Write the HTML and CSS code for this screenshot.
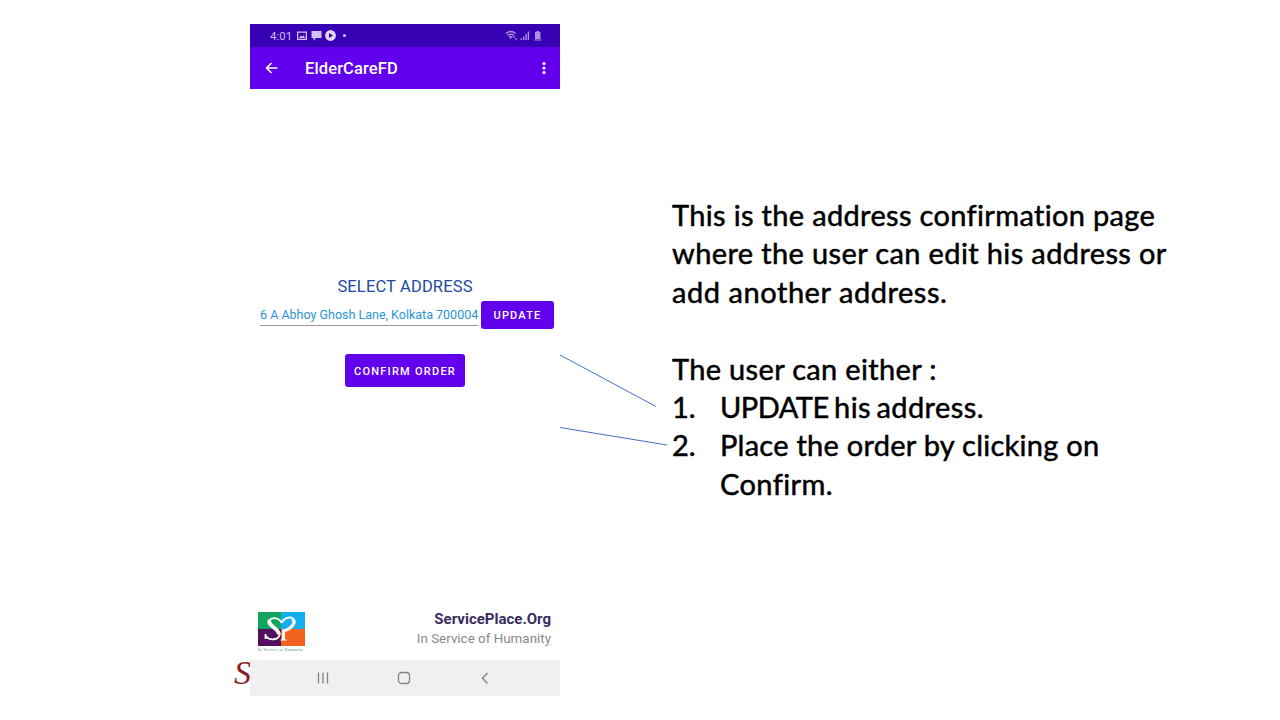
FILE: index.html
```html
<!DOCTYPE html>
<html lang="en">
<head>
<meta charset="utf-8">
<title>ElderCareFD</title>
<link rel="stylesheet" href="styles.css">
</head>
<body>
<main class="slide">
  <span class="slide-mark">S</span>
  <section class="phone">
    <div class="status">
      <span class="clock">4:01</span>
      <svg class="status-left" width="52" height="12" viewBox="0 0 52 12">
        <path fill="#d0c2f4" fill-rule="evenodd" d="M0 1.500h10v8.500H0zM1.300 2.800v5.900h7.400V2.800zM2 8l1.900-2.600 1.400 1.400 1.300-1.900L8 8z"/>
        <path fill="#d0c2f4" d="M14.500 1h10v7h-5.500l-2.500 2.700V8h-2z"/>
        <circle cx="33.500" cy="5.500" r="5.400" fill="#e0d7f8"/>
        <path fill="#3700b3" d="M32 2.900l4 2.600-4 2.600z"/>
        <circle cx="47.500" cy="5.500" r="1.600" fill="#d0c2f4"/>
      </svg>
      <svg class="status-right" width="38" height="12" viewBox="0 0 38 12">
        <g fill="none" stroke="#a991e4" stroke-width="1.500"><path d="M.8 3.500q5-4 10 0M2.400 5.500q3.400-2.600 6.600 0M4 7.400q1.700-1.200 3.400 0"/></g>
        <path fill="#a991e4" d="M4.600 7.600h2.200l-1.100 1.600zM8 7.500l1.300-1.800 1.300 1.800zM9.800 8.500h2.600l-1.300 2zM15.500 8.500h1.500V10h-1.500zM18 6.500h1.400V10H18zM20.400 4h1.400v6h-1.400zM22.700 1.500h1.400V10h-1.400zM30 2h1.500V1h2.500v1h1.500v7H30zM29.500 9.500h7v1h-7z"/>
      </svg>
    </div>
    <header class="appbar">
      <svg class="back" width="14" height="12" viewBox="0 0 14 12"><path d="M12.500 6H1.500M6.500 1l-5 5 5 5" fill="none" stroke="#fff" stroke-width="1.500"/></svg>
      <h1 class="title">ElderCareFD</h1>
      <svg class="more" width="4" height="14" viewBox="0 0 4 14" fill="#fff"><circle cx="2" cy="2.500" r="1.600"/><circle cx="2" cy="7" r="1.600"/><circle cx="2" cy="11.500" r="1.600"/></svg>
    </header>
    <div class="content">
      <h2 class="select">SELECT ADDRESS</h2>
      <div class="row">
        <span class="address">6 A Abhoy Ghosh Lane, Kolkata 700004</span>
        <button class="btn update">UPDATE</button>
      </div>
      <button class="btn confirm">CONFIRM ORDER</button>
    </div>
    <footer class="brand">
      <div class="logo">
        <svg width="47" height="34" viewBox="0 0 47 34">
          <path fill="#10a45c" d="M0 0h23v17H0z"/><path fill="#12aeef" d="M23 0h24v17H23z"/><path fill="#54105f" d="M0 17h23v17H0z"/><path fill="#f26322" d="M23 17h24v17H23z"/>
          <g fill="none" stroke="#fff" stroke-linejoin="round">
            <path stroke-width="1.800" d="M23.500 11C22 6 14.500 4.500 11.500 8"/>
            <path stroke-width="3.700" d="M11.700 8C8.500 14 21 15.500 21 22.500"/>
            <path stroke-width="1.800" d="M21.700 21.500c0 7-10.500 7.500-13.700 2.500M7.500 22v5"/>
            <path stroke-width="2" d="M23.500 11c2-5 8-6.500 11.500-4.500"/>
            <path stroke-width="3.300" d="M34.500 7c4.500 4-2 10-8.500 12"/>
            <path stroke-width="2.800" d="M25.500 17.500V28"/>
            <path stroke-width="1" d="M22.500 28h6"/>
          </g>
        </svg>
        <span class="logo-caption">In Service of Humanity</span>
      </div>
      <div class="brand-text">
        <strong class="brand-name">ServicePlace.Org</strong>
        <span class="tagline">In Service of Humanity</span>
      </div>
    </footer>
    <nav class="nav">
      <svg width="14" height="14" viewBox="0 0 14 14"><path d="M2.500 1.500v11M7 1.500v11M11.500 1.500v11" stroke="#848484" stroke-width="1.300"/></svg>
      <svg width="14" height="14" viewBox="0 0 14 14"><rect x="1.500" y="1.500" width="11" height="11" rx="3" fill="none" stroke="#848484" stroke-width="1.300"/></svg>
      <svg width="14" height="14" viewBox="0 0 14 14"><path d="M9.500 2L4.500 7.200l5 5.300" fill="none" stroke="#848484" stroke-width="1.400"/></svg>
    </nav>
  </section>
  <svg class="connectors" width="112" height="96" viewBox="0 0 112 96"><path d="M0 5l96 51.500M0 77.500l107 17.500" fill="none" stroke="#4472c4" stroke-width="1"/></svg>
  <section class="notes">
    <p class="para"><span class="l1">This is the address confirmation page</span><br><span class="l2">where the user can edit his address or</span><br><span class="l3">add another address.</span></p>
    <p class="para"><span class="l4">The user can either :</span></p>
    <div class="item"><span class="num">1.</span><span class="l5"><span class="caps">UPDATE</span> his address.</span></div>
    <div class="item"><span class="num">2.</span><div><span class="l6">Place the order by clicking on</span><br><span class="l7">Confirm.</span></div></div>
  </section>
</main>
</body>
</html>
```
FILE: styles.css
```css
* { box-sizing: border-box; }
body { margin: 0; background: #fff; }
h1, h2, p { margin: 0; }
.slide { position: relative; display: flex; width: 1280px; height: 720px; padding: 24px 0 0 250px; overflow: hidden; }
.slide-mark { position: absolute; left: 234px; top: 654px; font: italic 34px/38px "Liberation Serif", serif; color: #8c1c26; }
.phone { position: relative; display: flex; flex-direction: column; width: 310px; height: 672px; background: #fff; font-family: Roboto, sans-serif; }
.status { display: flex; align-items: center; height: 23px; padding: 0 17px 0 20px; background: #3700b3; }
.clock { width: 27px; font-size: 11.500px; line-height: 14px; color: #cdbff2; }
.status-right { margin-left: auto; }
.appbar { display: flex; align-items: center; height: 42px; padding: 0 14px 0 15px; background: #6200ee; }
.title { margin: 2px 0 0 26px; font-size: 16.500px; font-weight: 500; line-height: 20px; letter-spacing: 0.120px; color: #fff; }
.more { margin-left: auto; }
.content { display: flex; flex-direction: column; align-items: center; flex: 1; padding-top: 187px; }
.select { font-size: 16.500px; font-weight: 400; line-height: 21px; letter-spacing: 0.150px; color: #2449a0; white-space: nowrap; }
.row { display: flex; align-self: stretch; justify-content: space-between; margin-top: 4px; padding: 0 6px 0 10px; }
.address { width: 218px; height: 25px; border-bottom: 1px solid #999; font-size: 12.500px; line-height: 28px; color: #2b93d5; white-space: nowrap; }
.btn { padding: 1px 0 0; border: 0; border-radius: 3px; background: #6200ee; color: #fff; font: 500 11px/28px Roboto, sans-serif; letter-spacing: 1.180px; white-space: nowrap; }
.update { width: 73px; height: 28px; }
.confirm { width: 120px; height: 33px; margin-top: 25px; padding-top: 2px; line-height: 32px; letter-spacing: 1.250px; }
.brand { display: flex; justify-content: space-between; height: 50px; padding: 0 9px 0 8px; }
.logo { width: 47px; padding-top: 2px; }
.logo svg, .nav svg { display: block; }
.logo-caption { display: block; font: 4px/7px "Liberation Serif", serif; letter-spacing: 0.350px; color: #50867c; white-space: nowrap; }
.brand-text { display: flex; flex-direction: column; align-items: flex-end; }
.brand-name { font-size: 15px; line-height: 19px; font-weight: 700; color: #392b5c; }
.tagline { font-size: 13.400px; line-height: 20px; color: #858b8b; }
.nav { display: flex; gap: 67px; height: 36px; padding: 11px 0 0 66px; background: #f0f0f0; }
.connectors { margin-top: 326px; }
.notes { padding-top: 172px; font: 29px/38.400px Lato, sans-serif; font-variant-ligatures: none; color: #000; -webkit-text-stroke: 0.500px #000; white-space: nowrap; }
.para { margin-bottom: 38.400px; }
.para + .para { margin-bottom: 0; }
.item { display: flex; }
.num { width: 48px; }
.l1 { letter-spacing: 0.330px; }
.l2 { letter-spacing: 0.370px; }
.l3 { letter-spacing: 0.550px; }
.l4 { letter-spacing: 0.330px; }
.l5 { letter-spacing: 0.430px; word-spacing: -2.500px; }
.caps { letter-spacing: -0.500px; }
.l6 { letter-spacing: 0.260px; }
.l7 { letter-spacing: 0.400px; }
```
